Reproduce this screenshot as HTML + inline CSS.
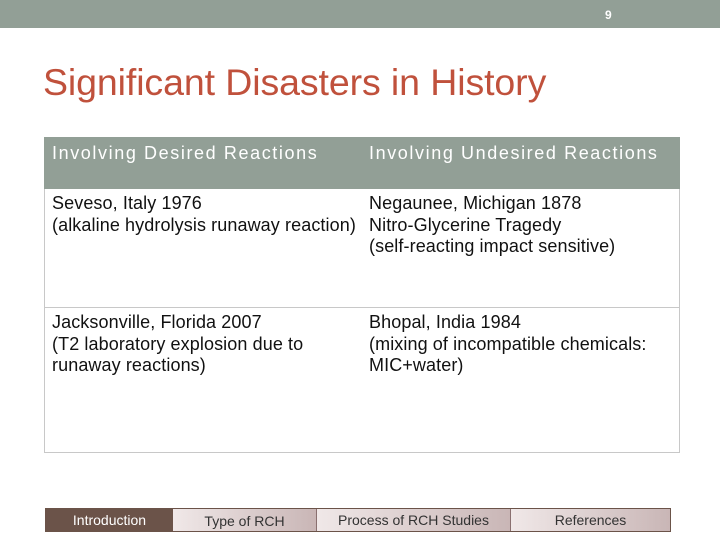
<html><body style="margin:0;width:720px;height:540px;position:relative;background:#fff;font-family:'Liberation Sans',sans-serif;overflow:hidden">
<div style="position:absolute;left:0;top:0;width:720px;height:28px;background:#929f96"></div>
<div style="position:absolute;left:605px;top:8px;font-size:12px;color:#fff;font-weight:bold">9</div>
<div style="position:absolute;left:43px;top:61px;font-size:37.5px;color:#c0513c;letter-spacing:-0.1px">Significant Disasters in History</div>
<div style="position:absolute;left:44px;top:137px;width:636px;height:52px;background:#929f96"></div>
<div style="position:absolute;left:44px;top:189px;width:634px;height:263px;border:1px solid #c8c8c8;border-top:none"></div>
<div style="position:absolute;left:45px;top:307px;width:634px;height:1px;background:#c8c8c8"></div>
<div style="position:absolute;left:52px;top:143px;font-size:18px;letter-spacing:1.6px;color:#fff">Involving Desired Reactions</div>
<div style="position:absolute;left:369px;top:143px;font-size:18px;letter-spacing:1.6px;color:#fff">Involving Undesired Reactions</div>
<div style="position:absolute;left:52px;top:193px;font-size:18px;letter-spacing:0.1px;line-height:21.5px;color:#111;white-space:nowrap">Seveso, Italy 1976<br>(alkaline hydrolysis runaway reaction)</div>
<div style="position:absolute;left:369px;top:193px;font-size:18px;letter-spacing:0.1px;line-height:21.5px;color:#111;white-space:nowrap">Negaunee, Michigan 1878<br>Nitro-Glycerine Tragedy<br>(self-reacting impact sensitive)</div>
<div style="position:absolute;left:52px;top:312px;font-size:18px;letter-spacing:0.1px;line-height:21.5px;color:#111;white-space:nowrap">Jacksonville, Florida 2007<br>(T2 laboratory explosion due to<br>runaway reactions)</div>
<div style="position:absolute;left:369px;top:312px;font-size:18px;letter-spacing:0.1px;line-height:21.5px;color:#111;white-space:nowrap">Bhopal, India 1984<br>(mixing of incompatible chemicals:<br>MIC+water)</div>
<div style="position:absolute;left:45px;top:508px;width:626px;height:24px;border:1px solid #6b5349;box-sizing:border-box;display:flex;font-size:14px;color:#333">
<div style="width:127px;background:#6b5349;color:#fff;text-align:center;line-height:22px">Introduction</div>
<div style="width:143px;background:linear-gradient(90deg,#f0e8e8,#c9b6b6);border-right:1px solid #8a7070;text-align:center;line-height:25px">Type of RCH</div>
<div style="width:193px;background:linear-gradient(90deg,#f0e8e8,#c9b6b6);border-right:1px solid #8a7070;text-align:center;line-height:22px">Process of RCH Studies</div>
<div style="flex:1;background:linear-gradient(90deg,#f0e8e8,#c9b6b6);text-align:center;line-height:22px">References</div>
</div>
</body></html>
